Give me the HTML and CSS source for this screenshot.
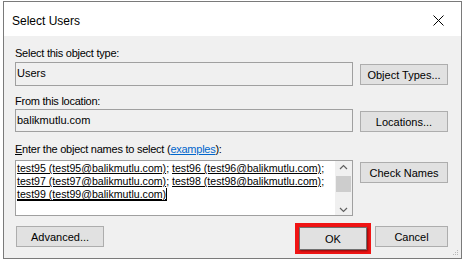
FILE: index.html
```html
<!DOCTYPE html>
<html lang="en">
<head>
    <meta charset="UTF-8">
    <title>Select Users</title>
    <link rel="stylesheet" href="styles.css">
</head>
<body>

    <div class="dialog">
        <div class="titlebar">
            <span class="title">Select Users</span>
            <svg class="close" width="11" height="11" viewBox="0 0 11 11">
                <path d="M0.5 0.5 L10.5 10.5 M10.5 0.5 L0.5 10.5" stroke="#000" stroke-width="1" fill="none"/>
            </svg>
        </div>

        <div class="content">
            <div class="label lbl-first">Select this object type:</div>
            <div class="field-row">
                <div class="textbox tb-type">Users</div>
                <button class="btn btn-side">Object Types...</button>
            </div>

            <div class="label lbl-second">From this location:</div>
            <div class="field-row">
                <div class="textbox tb-loc">balikmutlu.com</div>
                <button class="btn btn-side">Locations...</button>
            </div>

            <div class="label lbl-third"><u>E</u>nter the object names to select (<a class="link" href="#">examples</a>):</div>
            <div class="field-row">
                <div class="names-box">
                    <div class="names-text">
                        <span class="name">test95 (test95@balikmutlu.com)</span>; <span class="name">test96 (test96@balikmutlu.com)</span>;<br>
                        <span class="name">test97 (test97@balikmutlu.com)</span>; <span class="name">test98 (test98@balikmutlu.com)</span>;<br>
                        <span class="name name-current">test99 (test99@balikmutlu.com)</span>
                    </div>
                    <div class="scrollbar">
                        <svg class="arrow" width="9" height="6" viewBox="0 0 9 6"><path d="M1 5 L4.5 1.5 L8 5" stroke="#606060" stroke-width="1.2" fill="none"/></svg>
                        <div class="thumb"></div>
                        <svg class="arrow" width="9" height="6" viewBox="0 0 9 6"><path d="M1 1 L4.5 4.5 L8 1" stroke="#606060" stroke-width="1.2" fill="none"/></svg>
                    </div>
                </div>
                <button class="btn btn-side">Check Names</button>
            </div>

            <div class="footer">
                <button class="btn btn-adv">Advanced...</button>
                <div class="spacer"></div>
                <div class="ok-frame">
                    <button class="btn btn-ok">OK</button>
                </div>
                <button class="btn btn-cancel">Cancel</button>
            </div>

            <svg class="grip" width="7" height="7" viewBox="0 0 7 7">
                <rect x="5" y="1" width="1" height="1" fill="#b8b8b8"/>
                <rect x="3" y="3" width="1" height="1" fill="#b8b8b8"/>
                <rect x="5" y="3" width="1" height="1" fill="#b8b8b8"/>
                <rect x="1" y="5" width="1" height="1" fill="#b8b8b8"/>
                <rect x="3" y="5" width="1" height="1" fill="#b8b8b8"/>
                <rect x="5" y="5" width="1" height="1" fill="#b8b8b8"/>
            </svg>
        </div>
    </div>

</body>
</html>
```

FILE: styles.css
```css
body {
    margin: 0;
    background: #ffffff;
    font-family: "Liberation Sans", Arial, sans-serif;
    font-size: 11px;
    color: #000;
}
.dialog {
    margin: 1px 0 0 3px;
    width: 457px;
    height: 256px;
    border: 1px solid #7a7a7a;
    background: #f0f0f0;
}
.titlebar {
    height: 34px;
    background: #ffffff;
    display: flex;
    align-items: center;
    padding: 2px 17px 0 8px;
    box-sizing: border-box;
}
.title {
    font-size: 12px;
    flex: 1;
    margin-top: 2px;
}
.close {
    display: block;
}
.content {
    position: relative;
    padding: 0 13px 0 11px;
    height: 222px;
}
.label {
    height: 13px;
    line-height: 13px;
    letter-spacing: -0.25px;
}
.lbl-first {
    padding-top: 11px;
    margin-bottom: 2px;
}
.lbl-second {
    margin-top: 9px;
    margin-bottom: 1px;
}
.lbl-third {
    margin-top: 11px;
    margin-bottom: 4px;
}
.link {
    color: #0066cc;
}
.field-row {
    display: grid;
    grid-template-columns: 338px 88px;
    column-gap: 7px;
    align-items: start;
}
.textbox {
    box-sizing: border-box;
    border: 1px solid #a0a0a0;
    background: #f0f0f0;
    padding: 0 1px;
}
.tb-type {
    height: 24px;
    line-height: 21px;
}
.tb-loc {
    height: 23px;
    line-height: 21px;
}
.btn {
    box-sizing: border-box;
    background: #e1e1e1;
    border: 1px solid #adadad;
    font-family: inherit;
    font-size: 11px;
    color: #000;
    height: 21px;
    padding: 0;
}
.btn-side {
    margin-top: 2px;
}
.names-box {
    box-sizing: border-box;
    height: 56px;
    border: 1px solid #a0a0a0;
    background: #ffffff;
    display: flex;
}
.names-text {
    flex: 1;
    padding: 1px 0 0 1px;
    line-height: 13px;
    white-space: nowrap;
    font-size: 10.6px;
}
.name {
    text-decoration: underline;
}
.name-current {
    border-right: 1px solid #000;
    border-bottom: 1px solid #000;
}
.scrollbar {
    width: 17px;
    background: #f0f0f0;
    display: flex;
    flex-direction: column;
    align-items: center;
    padding: 3px 0 2px;
    box-sizing: border-box;
}
.arrow {
    display: block;
    flex: none;
}
.thumb {
    width: 15px;
    height: 16px;
    background: #cdcdcd;
    margin: 6px 0 auto;
}
.footer {
    display: flex;
    align-items: flex-start;
    margin-top: 7px;
}
.btn-adv {
    width: 88px;
    margin: 3px 0 0 1px;
}
.spacer {
    flex: 1;
}
.ok-frame {
    border: 4px solid #f01414;
    margin-right: 4px;
}
.btn-ok {
    display: block;
    width: 68px;
    height: 23px;
    border-color: #707070;
    box-shadow: 1px 1px 2px rgba(0, 0, 0, 0.45);
}
.btn-cancel {
    width: 73px;
    margin-top: 3px;
}
.grip {
    position: absolute;
    right: 2px;
    bottom: 2px;
}
```
